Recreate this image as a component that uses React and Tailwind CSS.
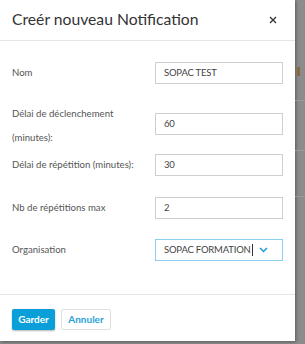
import React from 'react';

const Field = ({ label, value, className = '' }) => (
    <div className={`flex items-center ${className}`}>
        <div className="w-[143px] text-[9.6px] leading-[24px] text-[#555] whitespace-nowrap">{label}</div>
        <div className="w-[128px] h-[22px] border border-[#cfcfcf] bg-white px-[8px] flex items-center text-[9.5px] tracking-[-0.2px] text-[#444]">
            {value}
        </div>
    </div>
);

const App = () => {
    return (
        <div className="w-[305px] h-[344px] bg-[#8c8c8c] relative overflow-hidden" style={{ fontFamily: 'Lato, "Open Sans", sans-serif' }}>
            {/* background bits behind the modal */}
            <div className="absolute left-[297px] top-[67px] w-[3px] h-[9px] bg-[#8a6a3c]" />
            <div className="absolute left-[295px] top-[100px] w-[10px] h-px bg-[#9a9a9a]" />
            <div className="absolute left-[295px] top-[150px] w-[10px] h-px bg-[#9a9a9a]" />
            <div className="absolute left-[295px] top-[196px] w-[10px] h-px bg-[#9a9a9a]" />

            <div className="w-[295px] h-[341px] bg-white flex flex-col shadow-[1px_1px_3px_rgba(0,0,0,0.35)]">
                <div className="h-[41px] border-b border-[#e5e5e5] flex items-center justify-between pl-[12px] pr-[18px] shrink-0">
                    <h2 className="text-[15.7px] text-[#333] font-normal whitespace-nowrap">Creér nouveau Notification</h2>
                    <svg width="8" height="8" viewBox="0 0 8 8" className="text-[#333]">
                        <path d="M1 1 L7 7 M7 1 L1 7" stroke="currentColor" strokeWidth="1.3" />
                    </svg>
                </div>

                <div className="px-[12px] flex flex-col">
                    <Field label="Nom" value="SOPAC TEST" className="mt-[20px]" />
                    <div className="flex items-start mt-[17px]">
                        <div className="w-[143px] text-[9.6px] leading-[24px] text-[#555] whitespace-nowrap">
                            Délai de déclenchement<br />(minutes):
                        </div>
                        <div className="mt-[11px] w-[128px] h-[22px] border border-[#cfcfcf] bg-white px-[8px] flex items-center text-[9.5px] tracking-[-0.2px] text-[#444]">
                            60
                        </div>
                    </div>
                    <Field label="Délai de répétition (minutes):" value="30" className="mt-[3px]" />
                    <Field label="Nb de répétitions max" value="2" className="mt-[19px]" />
                    <div className="flex items-center mt-[18px]">
                        <div className="w-[143px] text-[9.6px] leading-[24px] text-[#555]">Organisation</div>
                        <div className="w-[128px] h-[22px] border border-[#8ad0ee] bg-white pl-[8px] pr-[14px] flex items-center justify-between text-[9.5px] tracking-[-0.2px] text-[#444]">
                            <span className="flex items-center whitespace-nowrap">
                                SOPAC FORMATION
                                <span className="inline-block w-px h-[12px] bg-[#333] ml-px" />
                            </span>
                            <svg width="9" height="6" viewBox="0 0 9 6">
                                <path d="M1 1 L4.5 4.5 L8 1" fill="none" stroke="#1a9ad6" strokeWidth="1.5" />
                            </svg>
                        </div>
                    </div>
                </div>

                <div className="mt-[32px] border-t border-[#e5e5e5] pl-[12px] pt-[14px] flex gap-[6px]">
                    <button className="w-[43px] h-[21px] rounded-[2px] bg-[#0a9fd8] text-white text-[10px] font-bold shadow-[0_1px_2px_rgba(0,0,0,0.3)]">
                        Garder
                    </button>
                    <button className="w-[50px] h-[21px] rounded-[2px] bg-white border border-[#e0e0e0] text-[#2a9fd6] text-[10px] font-bold">
                        Annuler
                    </button>
                </div>
            </div>
        </div>
    );
};

export default App;
